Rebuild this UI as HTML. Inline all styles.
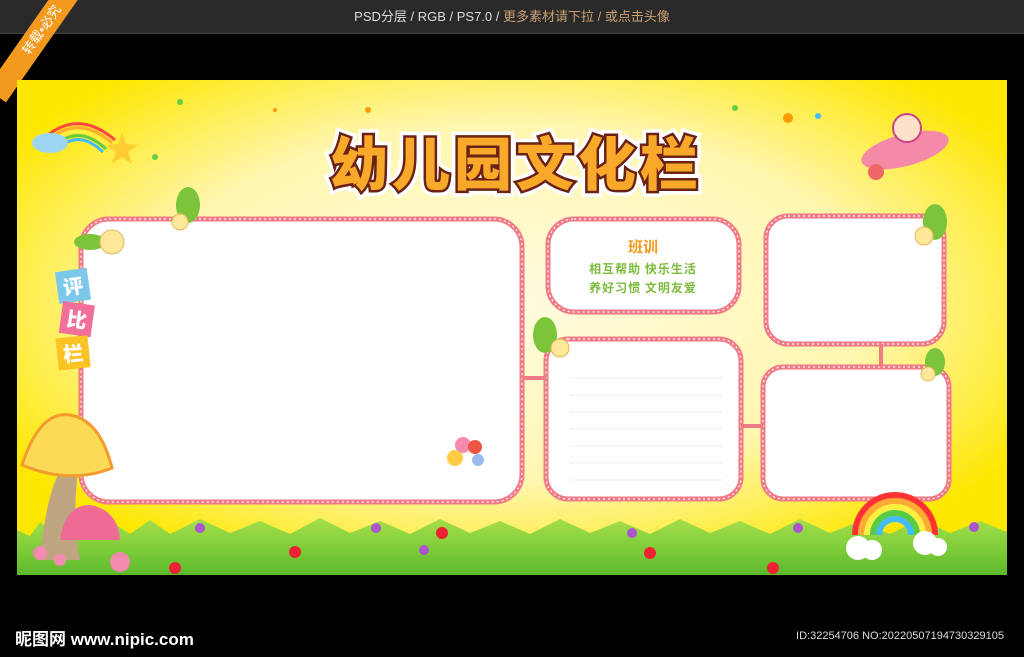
<!DOCTYPE html>
<html><head><meta charset="utf-8">
<style>
body{margin:0;width:1024px;height:657px;background:#000;overflow:hidden;position:relative;font-family:"Liberation Sans","Noto Sans CJK SC",sans-serif}
.top{position:absolute;left:0;top:0;width:1024px;height:33px;background:#2a2a2a;border-bottom:1px solid #444;text-align:center;color:#ddd;font-size:13px;line-height:33px}
.top span{color:#c9a070}
.rib{position:absolute;left:-38px;top:18px;width:160px;height:24px;background:#f39a1e;color:#fff;font-size:13px;line-height:24px;text-align:center;transform:rotate(-55deg);transform-origin:center}
.foot1{position:absolute;left:15px;top:625px;color:#fff;font-size:17px;font-weight:bold}
.foot2{position:absolute;right:20px;top:630px;color:#ddd;font-size:11px}
</style></head><body>
<div class="top">PSD分层 / RGB / PS7.0 / <span>更多素材请下拉 / 或点击头像</span></div>
<div class="rib">转载•必究</div>
<svg style="position:absolute;left:0;top:0" width="1024" height="657" xmlns="http://www.w3.org/2000/svg">
<defs>
<radialGradient id="bg" cx="50%" cy="45%" r="60%">
<stop offset="0" stop-color="#fffbe0"/><stop offset="0.6" stop-color="#fff6b0"/><stop offset="1" stop-color="#fde700"/>
</radialGradient>
<linearGradient id="gr" x1="0" y1="0" x2="0" y2="1"><stop offset="0" stop-color="#a6e04a"/><stop offset="1" stop-color="#5cba2c"/></linearGradient>
</defs>
<rect x="17" y="80" width="990" height="495" fill="url(#bg)"/>
<path d="M17 545 L17 530 L30 536 L40 522 L55 534 L70 520 L90 533 L110 521 L130 534 L150 520 L170 534 L200 519 L230 533 L260 521 L290 534 L320 518 L350 533 L380 521 L410 534 L440 519 L470 533 L500 521 L530 534 L560 519 L590 533 L620 521 L650 534 L680 519 L710 533 L740 521 L770 534 L800 519 L830 533 L860 521 L890 534 L920 519 L950 533 L980 521 L1007 532 L1007 575 L17 575Z" fill="url(#gr)"/>
<g fill="#fff" stroke="#f07a86" stroke-width="5">
<rect x="81" y="219" width="441" height="283" rx="28"/>
<rect x="548" y="219" width="191" height="93" rx="26"/>
<rect x="546" y="339" width="195" height="160" rx="22"/>
<rect x="766" y="216" width="178" height="128" rx="22"/>
<rect x="763" y="367" width="186" height="132" rx="20"/>
</g>
<g fill="none" stroke="#fff" stroke-width="1.2" stroke-dasharray="2 3">
<rect x="81" y="219" width="441" height="283" rx="28"/>
<rect x="548" y="219" width="191" height="93" rx="26"/>
<rect x="546" y="339" width="195" height="160" rx="22"/>
<rect x="766" y="216" width="178" height="128" rx="22"/>
<rect x="763" y="367" width="186" height="132" rx="20"/>
</g>
<g stroke="#f07a86" stroke-width="4"><line x1="522" y1="378" x2="546" y2="378"/><line x1="741" y1="426" x2="763" y2="426"/><line x1="881" y1="344" x2="881" y2="367"/></g>
<g stroke="#ccc" stroke-width="0.8" stroke-dasharray="1 1">
<line x1="570" y1="378" x2="722" y2="378"/><line x1="570" y1="395" x2="722" y2="395"/><line x1="570" y1="412" x2="722" y2="412"/><line x1="570" y1="429" x2="722" y2="429"/><line x1="570" y1="446" x2="722" y2="446"/><line x1="570" y1="463" x2="722" y2="463"/><line x1="570" y1="480" x2="722" y2="480"/>
</g>
<text x="516" y="185" text-anchor="middle" font-family="Noto Sans CJK SC,sans-serif" font-weight="900" font-size="58" fill="#f9a92a" stroke="#fff" stroke-width="12" paint-order="stroke" letter-spacing="4">幼儿园文化栏</text>
<text x="516" y="185" text-anchor="middle" font-family="Noto Sans CJK SC,sans-serif" font-weight="900" font-size="58" fill="#f9a92a" stroke="#6b2216" stroke-width="5" paint-order="stroke" letter-spacing="4">幼儿园文化栏</text>
<text x="643" y="252" text-anchor="middle" font-family="Noto Sans CJK SC,sans-serif" font-weight="bold" font-size="15" fill="#f59a1a">班训</text>
<text x="643" y="273" text-anchor="middle" font-family="Noto Sans CJK SC,sans-serif" font-weight="bold" font-size="12" fill="#7dbb3c" letter-spacing="1">相互帮助 快乐生活</text>
<text x="643" y="292" text-anchor="middle" font-family="Noto Sans CJK SC,sans-serif" font-weight="bold" font-size="12" fill="#7dbb3c" letter-spacing="1">养好习惯 文明友爱</text>
<g font-family="Noto Sans CJK SC,sans-serif" font-weight="900" font-size="20" fill="#fff" text-anchor="middle">
<g transform="rotate(-8 72 286)"><rect x="57" y="270" width="32" height="32" fill="#7cc8ea"/><text x="73" y="294">评</text></g>
<g transform="rotate(8 76 318)"><rect x="61" y="303" width="32" height="32" fill="#f26f9a"/><text x="77" y="327">比</text></g>
<g transform="rotate(-6 72 352)"><rect x="57" y="337" width="32" height="32" fill="#fcc325"/><text x="73" y="361">栏</text></g>
</g>
<g fill="none" stroke-width="3"><path d="M48 135 Q80 110 115 140" stroke="#f44"/><path d="M51 138 Q80 115 112 143" stroke="#fa3"/><path d="M54 141 Q80 120 109 146" stroke="#fe4"/><path d="M57 144 Q80 125 106 149" stroke="#6c4"/><path d="M60 147 Q80 130 103 152" stroke="#4bf"/></g>
<ellipse cx="50" cy="143" rx="18" ry="10" fill="#9cd6f2"/>
<polygon points="122,132 126,144 138,145 128,152 132,164 122,157 112,164 116,152 106,145 118,144" fill="#fc3"/>
<g fill="#6c4"><circle cx="180" cy="102" r="3"/><circle cx="155" cy="157" r="3"/><circle cx="735" cy="108" r="3"/></g>
<g fill="#f90"><circle cx="368" cy="110" r="3"/><circle cx="788" cy="118" r="5"/><circle cx="275" cy="110" r="2"/></g>
<circle cx="818" cy="116" r="3" fill="#4bf"/>
<ellipse cx="905" cy="150" rx="45" ry="16" fill="#f48aa8" transform="rotate(-15 905 150)"/>
<circle cx="907" cy="128" r="14" fill="#fde1c8" stroke="#c48" stroke-width="2"/>
<circle cx="876" cy="172" r="8" fill="#e66"/>
<g fill="#7cc43a"><ellipse cx="90" cy="242" rx="16" ry="8"/><ellipse cx="188" cy="205" rx="12" ry="18"/><ellipse cx="935" cy="222" rx="12" ry="18"/><ellipse cx="545" cy="335" rx="12" ry="18"/><ellipse cx="935" cy="362" rx="10" ry="14"/></g>
<g fill="#fde89a" stroke="#e7b85a"><circle cx="112" cy="242" r="12"/><circle cx="180" cy="222" r="8"/><circle cx="924" cy="236" r="9"/><circle cx="560" cy="348" r="9"/><circle cx="928" cy="374" r="7"/></g>
<path d="M40 560 Q45 500 60 470 L78 470 Q72 520 80 560Z" fill="#bfa582"/>
<path d="M22 465 Q40 410 70 415 Q100 420 112 468 Q70 485 22 465Z" fill="#fbdb56" stroke="#f49b2f" stroke-width="3"/>
<path d="M60 540 Q65 505 90 505 Q118 510 120 540Z" fill="#f06a96"/>
<circle cx="120" cy="562" r="10" fill="#f48ab0"/>
<circle cx="40" cy="553" r="7" fill="#f48ab0"/><circle cx="60" cy="560" r="6" fill="#f48ab0"/>
<circle cx="463" cy="445" r="8" fill="#f48ab0"/><circle cx="475" cy="447" r="7" fill="#e54"/><circle cx="455" cy="458" r="8" fill="#fc4"/><circle cx="478" cy="460" r="6" fill="#9be"/>
<g fill="none" stroke-width="6"><path d="M855 535 A40 40 0 0 1 935 535" stroke="#f33"/><path d="M861 535 A34 34 0 0 1 929 535" stroke="#fa3"/><path d="M867 535 A28 28 0 0 1 923 535" stroke="#fe4"/><path d="M873 535 A22 22 0 0 1 917 535" stroke="#5c4"/><path d="M879 535 A16 16 0 0 1 911 535" stroke="#4bf"/></g>
<g fill="#fff"><circle cx="858" cy="548" r="12"/><circle cx="872" cy="550" r="10"/><circle cx="925" cy="543" r="12"/><circle cx="938" cy="547" r="9"/></g>
<g fill="#e23"><circle cx="295" cy="552" r="6"/><circle cx="442" cy="533" r="6"/><circle cx="650" cy="553" r="6"/><circle cx="175" cy="568" r="6"/><circle cx="773" cy="568" r="6"/></g>
<g fill="#a5c"><circle cx="200" cy="528" r="5"/><circle cx="376" cy="528" r="5"/><circle cx="424" cy="550" r="5"/><circle cx="632" cy="533" r="5"/><circle cx="798" cy="528" r="5"/><circle cx="974" cy="527" r="5"/></g>
</svg>
<div class="foot1">昵图网 www.nipic.com</div>
<div class="foot2">ID:32254706 NO:20220507194730329105</div>
</body></html>
